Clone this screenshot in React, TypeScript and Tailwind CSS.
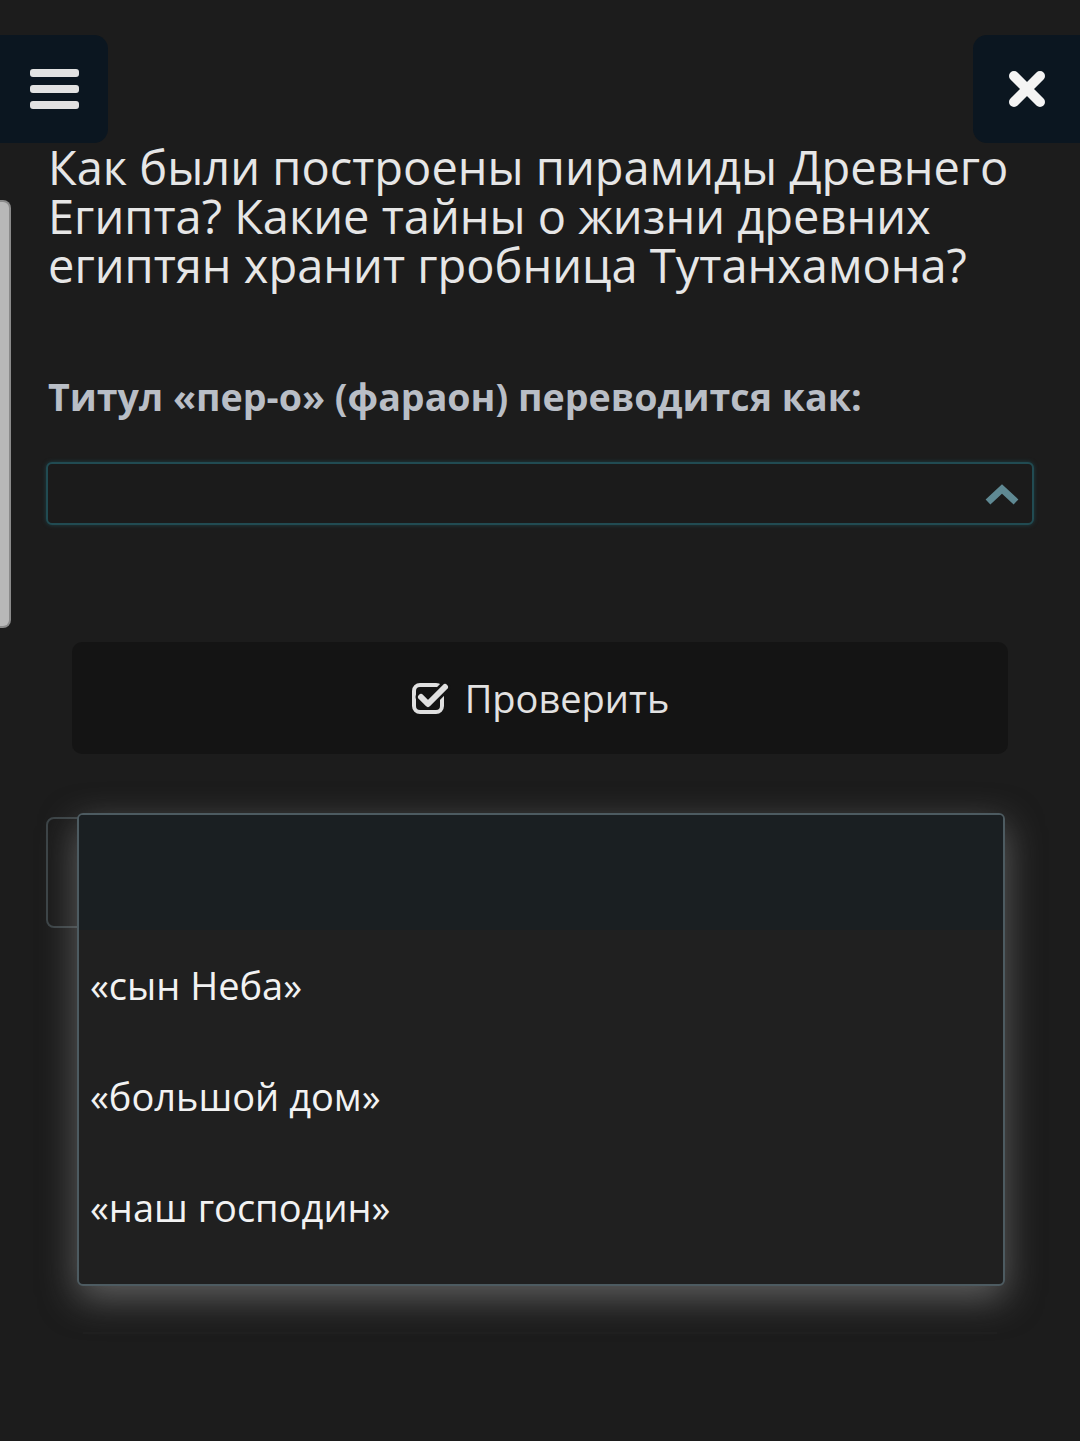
const options = ['«сын Неба»', '«большой дом»', '«наш господин»']

function MenuButton() {
  return (
    <button className="flex h-[108px] w-[108px] flex-col items-center justify-center gap-[8px] rounded-r-[14px] bg-[#0b1620]">
      <span className="h-[8px] w-[49px] rounded-[3px] bg-[#e2e2e2]" />
      <span className="h-[8px] w-[49px] rounded-[3px] bg-[#e2e2e2]" />
      <span className="h-[8px] w-[49px] rounded-[3px] bg-[#e2e2e2]" />
    </button>
  )
}

function CloseButton() {
  return (
    <button className="flex h-[108px] w-[107px] items-center justify-center rounded-l-[14px] bg-[#0b1620]">
      <svg width="40" height="40" viewBox="0 0 40 40">
        <path d="M7 7 L33 33 M33 7 L7 33" stroke="#f4f4f4" strokeWidth="10" strokeLinecap="round" />
      </svg>
    </button>
  )
}

function CheckSquare() {
  return (
    <svg width="40" height="36" viewBox="0 0 40 36" className="mr-[14px]">
      <rect x="3" y="5" width="28" height="27" rx="6" fill="none" stroke="#e0e0e0" strokeWidth="4" />
      <path d="M10 17 L17 24 L34 7" fill="none" stroke="#141414" strokeWidth="11" strokeLinecap="round" strokeLinejoin="round" />
      <path d="M10 17 L17 24 L34 7" fill="none" stroke="#e0e0e0" strokeWidth="6" strokeLinecap="round" strokeLinejoin="round" />
    </svg>
  )
}

export default function App() {
  return (
    <div
      className="relative min-h-[1441px] overflow-hidden bg-[#1c1c1c]"
      style={{ fontFamily: '"Open Sans", "Noto Sans", sans-serif' }}
    >
      <div className="flex justify-between pt-[35px]">
        <MenuButton />
        <CloseButton />
      </div>

      <h1 className="px-[48px] text-[47px] leading-[49px] font-normal text-[#e6e6e6]">
        Как были построены пирамиды Древнего Египта? Какие тайны о жизни древних египтян хранит гробница Тутанхамона?
      </h1>

      <p className="mt-[83px] px-[48px] text-[37.6px] leading-[48px] font-bold text-[#b9bec6]">
        Титул «пер-о» (фараон) переводится как:
      </p>

      <div className="mx-[46px] mt-[41px] flex h-[63px] items-center justify-end rounded-[6px] border-2 border-[#214b52] bg-[#1b1b1b] pr-[12px] shadow-[0_0_4px_#1e4046]">
        <svg width="36" height="24" viewBox="0 0 36 24">
          <path d="M4 20 L18 7 L32 20" fill="none" stroke="#5f8993" strokeWidth="7" strokeLinejoin="miter" />
        </svg>
      </div>

      <div className="mx-[72px] mt-[117px] flex h-[112px] items-center justify-center rounded-[10px] bg-[#141414] text-[38px] text-[#e2e2e2]">
        <CheckSquare />
        <span>Проверить</span>
      </div>

      <div className="mt-[63px] mr-[100px] ml-[46px] h-[111px] rounded-[8px] border-2 border-[#3c4447] bg-[#1b1b1b]" />

      <div className="mx-[83px] mt-[404px] h-[2px] bg-[#1f1f1f]" />

      {/* scroll indicator */}
      <div className="absolute top-[200px] left-0 h-[428px] w-[11px] rounded-r-[8px] border-2 border-l-0 border-[#8a8a8a] bg-[#b8b8b8]" />

      {/* open select list */}
      <div className="absolute top-[813px] left-[77px] w-[928px] overflow-hidden rounded-[6px] border-2 border-[#4d5b61] bg-[#202020] shadow-[0_12px_36px_rgba(140,140,140,0.6)]">
        <div className="h-[115px] bg-[#1a1f22]" />
        {options.map((o) => (
          <div key={o} className="flex h-[111px] items-center pl-[11px] text-[38px] text-[#f2f2f2]">
            {o}
          </div>
        ))}
        <div className="h-[21px]" />
      </div>
    </div>
  )
}
